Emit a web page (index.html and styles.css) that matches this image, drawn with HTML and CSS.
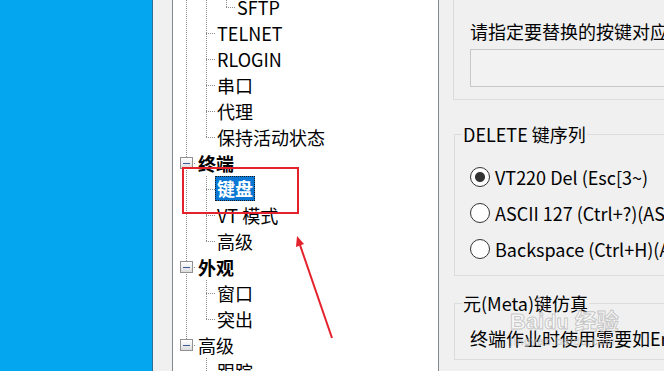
FILE: index.html
```html
<!DOCTYPE html>
<html lang="zh-CN">
<head>
    <meta charset="UTF-8">
    <title>键盘 - 会话属性</title>
    <link rel="stylesheet" href="styles.css">
</head>
<body>
<div class="screen">
    <div class="desktop"></div>

    <div class="window">
        <!-- 类别树 -->
        <div class="tree">
            <ul class="nodes">
                <li class="row"><span class="c v"></span><span class="c v"></span><span class="c e"></span><span class="lbl">SFTP</span></li>
                <li class="row"><span class="c v"></span><span class="c t"></span><span class="lbl">TELNET</span></li>
                <li class="row"><span class="c v"></span><span class="c t"></span><span class="lbl">RLOGIN</span></li>
                <li class="row"><span class="c v"></span><span class="c t"></span><span class="lbl">串口</span></li>
                <li class="row"><span class="c v"></span><span class="c t"></span><span class="lbl">代理</span></li>
                <li class="row"><span class="c v"></span><span class="c e"></span><span class="lbl">保持活动状态</span></li>
                <li class="row"><span class="c b"><i class="box"></i></span><span class="lbl root bold">终端</span></li>
                <li class="row"><span class="c v"></span><span class="c t"></span><span class="lbl selected">键盘</span></li>
                <li class="row"><span class="c v"></span><span class="c t"></span><span class="lbl">VT 模式</span></li>
                <li class="row"><span class="c v"></span><span class="c e"></span><span class="lbl">高级</span></li>
                <li class="row"><span class="c b"><i class="box"></i></span><span class="lbl root bold">外观</span></li>
                <li class="row"><span class="c v"></span><span class="c t"></span><span class="lbl">窗口</span></li>
                <li class="row"><span class="c v"></span><span class="c e"></span><span class="lbl">突出</span></li>
                <li class="row"><span class="c b last"><i class="box"></i></span><span class="lbl root">高级</span></li>
                <li class="row"><span class="c"></span><span class="c t"></span><span class="lbl">跟踪</span></li>
            </ul>
        </div>

        <!-- 属性面板 -->
        <div class="panel">
            <div class="group top-group">
                <div class="prompt">请指定要替换的按键对应的字符串</div>
                <div class="field"></div>
            </div>

            <fieldset class="group">
                <legend>DELETE 键序列</legend>
                <label class="radio"><span class="dot checked"></span>VT220 Del (Esc[3~)</label>
                <label class="radio"><span class="dot"></span>ASCII 127 (Ctrl+?)(ASCII 127)</label>
                <label class="radio"><span class="dot"></span>Backspace (Ctrl+H)(ASCII 8)</label>
            </fieldset>

            <fieldset class="group">
                <legend>元(Meta)键仿真</legend>
                <div class="note">终端作业时使用需要如Emacs的元键</div>
            </fieldset>
        </div>
    </div>

    <!-- 水印 -->
    <div class="mark">
        <div class="mark-logo">Bai<span class="paw">du</span> 经验</div>
        <div class="mark-url">jingyan.baidu.com</div>
    </div>

    <!-- 标注 -->
    <svg class="annot" width="664" height="371" viewBox="0 0 664 371">
        <rect x="183" y="168" width="115" height="45" fill="none" stroke="#e5212b" stroke-width="2"/>
        <line x1="332" y1="338" x2="300" y2="245" stroke="#e5212b" stroke-width="2"/>
        <polygon points="297,236 304,244 296,247" fill="#e5212b"/>
    </svg>
</div>
</body>
</html>
```

FILE: styles.css
```css
* {
    margin: 0;
    padding: 0;
    box-sizing: border-box;
}

body {
    font-family: "Noto Sans CJK SC", sans-serif;
    font-size: 18px;
    color: #000;
    background-color: #f0f0f0;
    overflow: hidden;
}

.screen {
    position: relative;
    display: flex;
    width: 664px;
    height: 371px;
    overflow: hidden;
}

.desktop {
    flex: 0 0 153px;
    background-color: #04a6f0;
    border-right: 1px solid #2f6e95;
}

.window {
    flex: 1;
    display: flex;
    padding-left: 19px;
    background-color: #f0f0f0;
    overflow: hidden;
}

/* 树 */
.tree {
    flex: 0 0 267px;
    background-color: #fff;
    border-left: 1px solid #828790;
    border-right: 1px solid #828790;
    overflow: hidden;
    padding-left: 3px;
}

.nodes {
    list-style: none;
    margin-top: -6px;
}

.row {
    display: flex;
    height: 26px;
    line-height: 26px;
    white-space: nowrap;
}

.c {
    flex: 0 0 20px;
    height: 26px;
}

.v {
    background: repeating-linear-gradient(#8c8c8c 0 1px, transparent 1px 2px) 10px 0 / 1px 100% no-repeat;
}

.t {
    background:
        repeating-linear-gradient(to right, #8c8c8c 0 1px, transparent 1px 2px) 10px 13px / 10px 1px no-repeat,
        repeating-linear-gradient(#8c8c8c 0 1px, transparent 1px 2px) 10px 0 / 1px 100% no-repeat;
}

.e {
    background:
        repeating-linear-gradient(to right, #8c8c8c 0 1px, transparent 1px 2px) 10px 13px / 10px 1px no-repeat,
        repeating-linear-gradient(#8c8c8c 0 1px, transparent 1px 2px) 10px 0 / 1px 14px no-repeat;
}

.b {
    display: flex;
    align-items: center;
    justify-content: center;
    background:
        repeating-linear-gradient(to right, #8c8c8c 0 1px, transparent 1px 2px) 10px 13px / 10px 1px no-repeat,
        repeating-linear-gradient(#8c8c8c 0 1px, transparent 1px 2px) 10px 0 / 1px 100% no-repeat;
}

.b.last {
    background:
        repeating-linear-gradient(to right, #8c8c8c 0 1px, transparent 1px 2px) 10px 13px / 10px 1px no-repeat,
        repeating-linear-gradient(#8c8c8c 0 1px, transparent 1px 2px) 10px 0 / 1px 8px no-repeat;
}

.box {
    display: block;
    width: 13px;
    height: 12px;
    margin-left: 1px;
    border: 1px solid #919191;
    background:
        linear-gradient(#3c5a9a, #3c5a9a) 50% 50% / 7px 1px no-repeat,
        linear-gradient(#fff, #dcdcdc);
}

.lbl {
    padding: 0 2px 0 1px;
}

.lbl.root {
    margin-left: 1px;
}

.bold {
    font-weight: bold;
}

.lbl.selected {
    height: 25px;
    line-height: 24px;
    margin-left: -1px;
    padding: 0 2px;
    background-color: #0a78d4;
    color: #fff;
    font-weight: bold;
    outline: 1px dotted #1a1a1a;
    outline-offset: -1px;
}

/* 面板 */
.panel {
    flex: 1;
    padding-left: 14px;
    overflow: hidden;
    white-space: nowrap;
}

.group {
    width: 260px;
    border: 1px solid #dcdcdc;
    min-width: 0;
}

.top-group {
    border-top: none;
    padding: 18px 0 12px 16px;
}

.prompt {
    line-height: 26px;
}

.field {
    margin-top: 5px;
    height: 38px;
    border: 1px solid #c8c8c8;
    background-color: #f2f2f2;
}

fieldset.group {
    margin: 21px 0 0 1px;
    padding: 12px 0 8px 15px;
}

fieldset.group + fieldset.group {
    margin-top: 14px;
    padding-top: 9px;
}

legend {
    line-height: 26px;
    padding: 0 1px;
    margin-left: -8px;
}

.radio {
    display: flex;
    align-items: center;
    gap: 5px;
    height: 36px;
}

.dot {
    flex: 0 0 20px;
    height: 20px;
    border: 1.5px solid #333;
    border-radius: 50%;
    background-color: #fff;
}

.dot.checked {
    background: radial-gradient(circle, #333 0 4.5px, #fff 5.5px);
}

.note {
    line-height: 26px;
}

/* 水印 */
.mark {
    position: absolute;
    left: 510px;
    top: 309px;
    color: rgba(255, 255, 255, 0.55);
    -webkit-text-stroke: 1px rgba(140, 140, 140, 0.45);
    pointer-events: none;
}

.mark-logo {
    font-family: "Liberation Sans", "Noto Sans CJK SC", sans-serif;
    font-size: 22px;
    font-weight: bold;
    line-height: 26px;
}

.paw {
    font-size: 20px;
}

.mark-url {
    font-family: "Liberation Sans", sans-serif;
    font-size: 11px;
    line-height: 12px;
    letter-spacing: 1px;
    -webkit-text-stroke: 0.5px rgba(140, 140, 140, 0.45);
}

.annot {
    position: absolute;
    left: 0;
    top: 0;
    pointer-events: none;
}
```
